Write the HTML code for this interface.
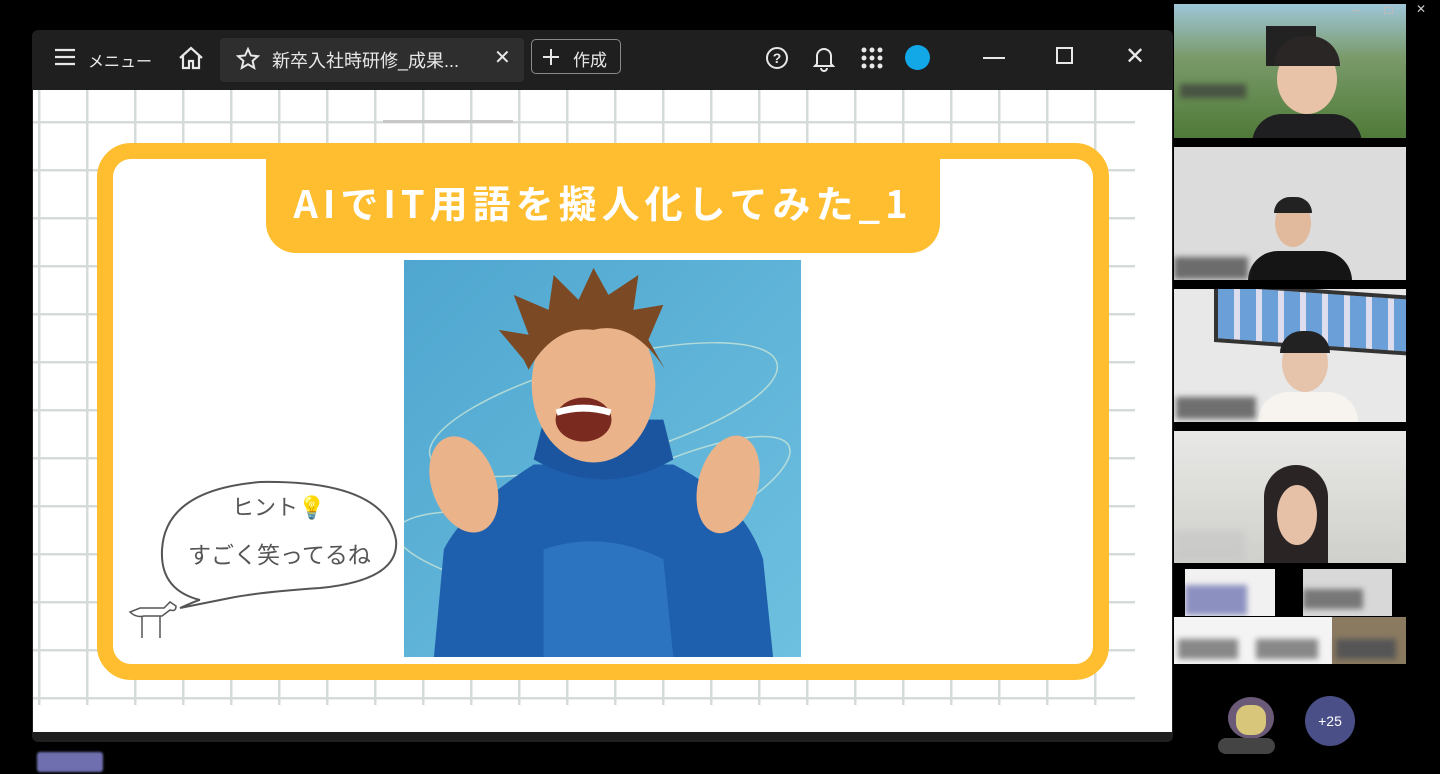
<!DOCTYPE html>
<html><head><meta charset="utf-8"><style>
*{margin:0;padding:0;box-sizing:border-box}
body{width:1440px;height:774px;background:#000;position:relative;overflow:hidden;font-family:"Liberation Sans","Noto Sans CJK JP",sans-serif}
.abs{position:absolute}
#win{left:32px;top:30px;width:1141px;height:712px;background:#1f1f1f;border-radius:6px}
#top{left:32px;top:30px;width:1141px;height:60px;color:#e8e8e8;font-size:17px}
#content{left:33px;top:90px;width:1139px;height:642px;background:#fff;overflow:hidden}
.grid{position:absolute;left:0;top:0;width:1102px;height:615px;
background-image:linear-gradient(to right,#d5dbda 2.5px,transparent 2.5px),linear-gradient(to bottom,#d5dbda 2.5px,transparent 2.5px);
background-size:48px 48px;background-position:5px 31px}
#frame{left:97px;top:143px;width:1012px;height:537px;border:16px solid #ffbe30;border-radius:34px;background:#fff}
#tab{left:266px;top:143px;width:674px;height:110px;background:#ffbe30;border-radius:0 0 30px 30px;color:#fff;font-size:38px;font-weight:bold;text-align:center;line-height:118px;letter-spacing:5px;font-family:"WenQuanYi Zen Hei","Noto Sans CJK JP",sans-serif}
.tile{position:absolute;overflow:hidden}
.blur{position:absolute;background:rgba(60,60,60,.7);filter:blur(3px)}
</style></head><body>
<div id="win" class="abs"></div>
<div id="top" class="abs">
 <svg class="abs" style="left:22px;top:17px" width="22" height="20"><path d="M1 3h20M1 10h20M1 17h20" stroke="#e8e8e8" stroke-width="2.2"/></svg>
 <div class="abs" style="left:56px;top:18px;font-size:16px">メニュー</div>
 <svg class="abs" style="left:145px;top:15px" width="28" height="26"><path d="M3 13 L14 3 L25 13 M6 11v12h6v-7h4v7h6V11" fill="none" stroke="#e8e8e8" stroke-width="2.2"/></svg>
 <div class="abs" style="left:188px;top:8px;width:304px;height:44px;background:#2e2e2e;border-radius:4px"></div>
 <svg class="abs" style="left:204px;top:17px" width="24" height="24"><path d="M12 2l2.9 6.5 7 .7-5.3 4.7 1.6 7L12 17.3 5.8 20.9l1.6-7L2.1 9.2l7-.7z" fill="none" stroke="#e8e8e8" stroke-width="2"/></svg>
 <div class="abs" style="left:240px;top:17px;font-size:18px">新卒入社時研修_成果...</div>
 <div class="abs" style="left:462px;top:15px;font-size:20px">✕</div>
 <div class="abs" style="left:499px;top:9px;width:90px;height:35px;border:1.5px solid #8a8a8a;border-radius:5px"></div>
 <svg class="abs" style="left:511px;top:19px" width="16" height="16"><path d="M8 0v16M0 8h16" stroke="#e8e8e8" stroke-width="2"/></svg>
 <div class="abs" style="left:541px;top:16px;font-size:17px">作成</div>
 <svg class="abs" style="left:733px;top:16px" width="24" height="24"><circle cx="12" cy="12" r="10" fill="none" stroke="#e8e8e8" stroke-width="2"/><text x="12" y="17" font-size="14" text-anchor="middle" fill="#e8e8e8" font-family="Liberation Sans" font-weight="bold">?</text></svg>
 <svg class="abs" style="left:781px;top:14px" width="22" height="28"><path d="M4 20V12a7 7 0 0 1 14 0v8l2 2H2z M8 24a3 3 0 0 0 6 0" fill="none" stroke="#e8e8e8" stroke-width="2"/></svg>
 <svg class="abs" style="left:829px;top:17px" width="22" height="22" fill="#e8e8e8"><g><circle cx="3" cy="3" r="2.5"/><circle cx="11" cy="3" r="2.5"/><circle cx="19" cy="3" r="2.5"/><circle cx="3" cy="11" r="2.5"/><circle cx="11" cy="11" r="2.5"/><circle cx="19" cy="11" r="2.5"/><circle cx="3" cy="19" r="2.5"/><circle cx="11" cy="19" r="2.5"/><circle cx="19" cy="19" r="2.5"/></g></svg>
 <div class="abs" style="left:873px;top:15px;width:25px;height:25px;border-radius:50%;background:#12a8e8"></div>
 <div class="abs" style="left:951px;top:27px;width:22px;height:2px;background:#e8e8e8"></div>
 <div class="abs" style="left:1024px;top:17px;width:17px;height:17px;border:2px solid #e8e8e8"></div>
 <div class="abs" style="left:1093px;top:12px;font-size:24px">✕</div>
</div>
<div id="content" class="abs"><div class="grid"></div>
<div class="abs" style="left:350px;top:30px;width:130px;height:3px;background:#c8c8c8"></div></div>
<div class="abs" style="left:33px;top:705px;width:1139px;height:27px;background:#fff"></div>
<div id="frame" class="abs"></div>
<div id="tab" class="abs">AIでIT用語を擬人化してみた_1</div>
<svg class="abs" style="left:404px;top:260px" width="397" height="397" viewBox="0 0 398 398">
 <defs><linearGradient id="bg" x1="0" y1="0" x2="1" y2="1"><stop offset="0" stop-color="#4fa6cf"/><stop offset="1" stop-color="#6ec0e0"/></linearGradient></defs>
 <rect width="398" height="398" fill="url(#bg)"/>
 <g fill="none" stroke="#d8ecd8" stroke-width="1.5" opacity=".7"><ellipse cx="200" cy="150" rx="180" ry="50" transform="rotate(-15 200 150)"/><ellipse cx="250" cy="250" rx="150" ry="40" transform="rotate(-25 250 250)"/><ellipse cx="150" cy="300" rx="160" ry="40" transform="rotate(10 150 300)"/></g>
 <path d="M30 398 L40 290 Q60 250 130 205 L270 205 Q340 240 360 300 L370 398Z" fill="#1e5fae"/>
 <path d="M130 200 Q200 240 270 200 L260 160 L140 160Z" fill="#1b55a0"/>
 <path d="M140 290 Q200 270 260 300 L270 398 L140 398Z" fill="#3a8ad0" opacity=".5"/>
 <ellipse cx="190" cy="125" rx="62" ry="78" fill="#eab38a"/>
 <path d="M120 100 L95 70 L125 75 L110 35 L145 50 L150 15 L175 40 L190 8 L205 35 L235 15 L230 50 L260 45 L245 80 L262 110 Q230 60 190 70 Q150 65 125 110Z" fill="#7b4a24"/>
 <ellipse cx="180" cy="160" rx="28" ry="22" fill="#7a2a1e"/>
 <path d="M152 150 Q180 140 208 150 L206 156 Q180 148 154 156Z" fill="#fff"/>
 <ellipse cx="60" cy="225" rx="32" ry="50" fill="#eab38a" transform="rotate(-20 60 225)"/>
 <ellipse cx="325" cy="225" rx="30" ry="50" fill="#eab38a" transform="rotate(15 325 225)"/>
</svg>
<svg class="abs" style="left:120px;top:470px" width="285" height="170">
 <path d="M80 130 Q40 120 42 80 Q45 20 140 12 Q265 10 276 70 Q280 110 200 118 Q140 122 110 128 L60 138 Q78 130 80 130Z" fill="#fff" stroke="#555" stroke-width="2"/>
 <path d="M10 142 q6 6 14 4 h18 l8 -6 q6 2 6 -4 l-6 -4 -6 6 h-24 z M22 146v22M40 146v22" fill="none" stroke="#555" stroke-width="1.5"/>
</svg>
<div class="abs" style="left:232px;top:490px;font-size:22px;color:#555">ヒント<span style="color:#f3c544">💡</span></div>
<div class="abs" style="left:188px;top:536px;font-size:23px;color:#555">すごく笑ってるね</div>
<!-- sidebar -->
<div class="tile" style="left:1174px;top:4px;width:232px;height:134px;background:linear-gradient(#9ec6d8 0,#7a9a6a 40%,#4f7a38 100%)">
 <div class="abs" style="left:92px;top:22px;width:50px;height:40px;background:#222"></div>
 <div class="abs" style="left:103px;top:40px;width:60px;height:70px;border-radius:50%;background:#e9c3a8"></div>
 <div class="abs" style="left:100px;top:32px;width:66px;height:30px;border-radius:33px 33px 0 0;background:#2b2626"></div>
 <div class="abs" style="left:78px;top:110px;width:110px;height:30px;border-radius:40px 40px 0 0;background:#1f1f22"></div>
 <div class="blur" style="left:6px;top:80px;width:66px;height:14px"></div></div>
<div class="tile" style="left:1174px;top:147px;width:232px;height:133px;background:#dcdcdc">
 <div class="abs" style="left:101px;top:52px;width:36px;height:48px;border-radius:50%;background:#e1b99c"></div>
 <div class="abs" style="left:100px;top:50px;width:38px;height:16px;border-radius:20px 20px 0 0;background:#222"></div>
 <div class="abs" style="left:74px;top:104px;width:104px;height:30px;border-radius:30px 30px 0 0;background:#151515"></div>
 <div class="blur" style="left:0;top:110px;width:74px;height:22px"></div></div>
<div class="tile" style="left:1174px;top:289px;width:232px;height:133px;background:#e8e8e8">
 <div class="abs" style="left:40px;top:0;width:200px;height:60px;background:repeating-linear-gradient(90deg,#6a9fd8 0 16px,#dde 16px 22px);border:4px solid #333;transform:skewY(4deg)"></div>
 <div class="abs" style="left:108px;top:45px;width:46px;height:58px;border-radius:50%;background:#e6c4ac"></div>
 <div class="abs" style="left:106px;top:42px;width:50px;height:22px;border-radius:25px 25px 0 0;background:#222"></div>
 <div class="abs" style="left:84px;top:103px;width:100px;height:34px;border-radius:30px 30px 0 0;background:#f7f4f0"></div>
 <div class="blur" style="left:2px;top:108px;width:80px;height:22px"></div></div>
<div class="tile" style="left:1174px;top:431px;width:232px;height:132px;background:linear-gradient(#e8e8e6,#cfcfcb)">
 <div class="abs" style="left:90px;top:34px;width:64px;height:100px;border-radius:32px 32px 0 0;background:#2a2424"></div>
 <div class="abs" style="left:103px;top:54px;width:40px;height:60px;border-radius:50%;background:#e6c1a8"></div>
 <div class="blur" style="left:0;top:100px;width:70px;height:30px;background:rgba(200,200,200,.7)"></div></div>
<div class="tile" style="left:1185px;top:569px;width:90px;height:47px;background:#f1f1f1"><div class="blur" style="left:0;top:16px;width:62px;height:30px;background:#8c90c0"></div></div>
<div class="tile" style="left:1303px;top:569px;width:89px;height:47px;background:#d8d8d8"><div class="blur" style="left:0;top:20px;width:60px;height:20px;background:#777"></div></div>
<div class="tile" style="left:1174px;top:617px;width:232px;height:47px;background:linear-gradient(90deg,#f4f4f4 0,#f4f4f4 68%,#8a7a60 68%)">
 <div class="blur" style="left:4px;top:22px;width:60px;height:20px;background:#888"></div>
 <div class="blur" style="left:82px;top:22px;width:62px;height:20px;background:#888"></div>
 <div class="blur" style="left:162px;top:22px;width:60px;height:20px;background:#555"></div></div>
<div class="abs" style="left:1228px;top:697px;width:46px;height:42px;border-radius:50%;background:#6a5a78"></div>
<div class="abs" style="left:1236px;top:705px;width:30px;height:30px;border-radius:40%;background:#d8c67a"></div>
<div class="abs" style="left:1218px;top:738px;width:57px;height:16px;border-radius:8px;background:#444"></div>
<div class="abs" style="left:1305px;top:696px;width:50px;height:50px;border-radius:50%;background:#4b4f88;color:#fff;font-size:14px;text-align:center;line-height:50px">+25</div>
<div class="abs" style="left:1352px;top:10px;width:8px;height:1px;background:#bbb"></div>
<div class="abs" style="left:1384px;top:7px;width:9px;height:7px;border:1px solid #bbb"></div>
<div class="abs" style="left:1416px;top:2px;color:#ccc;font-size:12px">✕</div>
<div class="abs" style="left:37px;top:752px;width:66px;height:20px;background:#6f6fb0;border-radius:3px;filter:blur(1px)"></div>
</body></html>
